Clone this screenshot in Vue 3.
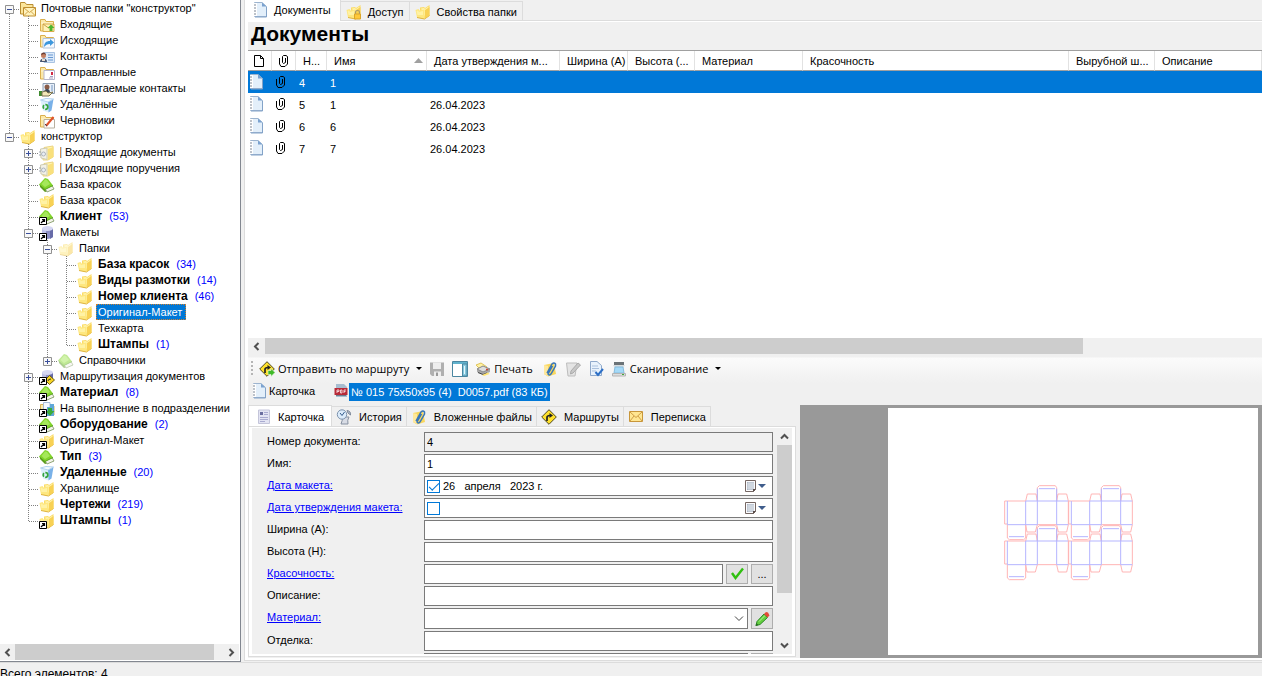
<script setup>
import { ref } from 'vue'

// Each guide letter draws one 19px column: I = line through, T = branch, L = last branch,
// D = line starts here, H = horizontal only, space = nothing.
const tree = [
  { g: 'D', box: '-', icon: 'mailroot', text: 'Почтовые папки "конструктор"' },
  { g: 'IT', icon: 'inbox', text: 'Входящие' },
  { g: 'IT', icon: 'outbox', text: 'Исходящие' },
  { g: 'IT', icon: 'contacts', text: 'Контакты' },
  { g: 'IT', icon: 'sent', text: 'Отправленные' },
  { g: 'IT', icon: 'suggest', text: 'Предлагаемые контакты' },
  { g: 'IT', icon: 'bin', text: 'Удалённые' },
  { g: 'IL', icon: 'draft', text: 'Черновики' },
  { g: 'L', box: '-', icon: 'folder', text: 'конструктор' },
  { g: ' T', box: '+', icon: 'docfolder', text: 'Входящие документы', bar: true },
  { g: ' T', box: '+', icon: 'docfolder', text: 'Исходящие поручения', bar: true },
  { g: ' T', icon: 'book', text: 'База красок' },
  { g: ' T', icon: 'folder', text: 'База красок' },
  { g: ' T', icon: 'book', link: true, text: 'Клиент', count: 53 },
  { g: ' T', box: '-', icon: 'db', link: true, text: 'Макеты' },
  { g: ' IT', box: '-', icon: 'folder', pale: true, text: 'Папки' },
  { g: ' IIT', icon: 'folder', text: 'База красок', count: 34 },
  { g: ' IIT', icon: 'folder', text: 'Виды размотки', count: 14 },
  { g: ' IIT', icon: 'folder', text: 'Номер клиента', count: 46 },
  { g: ' IIT', icon: 'folder', text: 'Оригинал-Макет', selected: true },
  { g: ' IIT', icon: 'folder', text: 'Техкарта' },
  { g: ' IIL', icon: 'folder', text: 'Штампы', count: 1 },
  { g: ' IL', box: '+', icon: 'book', pale: true, text: 'Справочники' },
  { g: ' T', box: '+', icon: 'dbroute', link: true, text: 'Маршрутизация документов' },
  { g: ' T', icon: 'book', link: true, text: 'Материал', count: 8 },
  { g: ' T', icon: 'task', link: true, text: 'На выполнение в подразделении' },
  { g: ' T', icon: 'book', link: true, text: 'Оборудование', count: 2 },
  { g: ' T', icon: 'folder', link: true, text: 'Оригинал-Макет' },
  { g: ' T', icon: 'book', text: 'Тип', count: 3 },
  { g: ' T', icon: 'bin', text: 'Удаленные', count: 20 },
  { g: ' T', icon: 'folder', text: 'Хранилище' },
  { g: ' T', icon: 'folder', text: 'Чертежи', count: 219 },
  { g: ' L', icon: 'folder', link: true, text: 'Штампы', count: 1 },
]

const guide = {
  I: 'M9.5 0V16',
  T: 'M9.5 0V16M10 9.5H19',
  L: 'M9.5 0V9M10 9.5H19',
  D: 'M9.5 10V16M10 9.5H19',
  ' ': '',
}

const rows = [
  { no: 4, name: 1, date: '' },
  { no: 5, name: 1, date: '26.04.2023' },
  { no: 6, name: 6, date: '26.04.2023' },
  { no: 7, name: 7, date: '26.04.2023' },
]

const dateOn = ref(true)
const approvedOn = ref(false)
const dateText = ref('26\u00a0\u00a0\u00a0апреля\u00a0\u00a0\u00a02023\u00a0г.')
</script>

<template>
  <div class="app">
    <svg class="defs" aria-hidden="true">
      <symbol id="folder" viewBox="0 0 16 16">
        <path d="M5 3.500 9 3 10 4 14.500 1V11.500L10 14.500 5 13Z" fill="#fbdc68" />
        <path d="M6 4.500 9 4 10 5 13.500 2.500V10L10 12.500Z" fill="#fff3ae" />
        <path d="M.500 6 3.500 5 4.500 6.500 9.500 5.500V15L2 13.500Z" fill="#fee77f" />
        <path d="M1.500 7 3 6.500 4 8 8 7V11L2.500 11Z" fill="#fff2a4" />
        <path d="M2 13.500 9.500 15 14.500 11.500" fill="none" stroke="#dfb43d" />
        <path d="M10 6 14.500 3V11.500L10 14.500Z" fill="#f8d154" />
      </symbol>
      <symbol id="yellowbox" viewBox="0 0 16 16">
        <path d="M1.500 14V2.500H6L7 4.500H14.500V14Z" fill="#fbe8a8" stroke="#dbb04e" />
        <path d="M2 6H14" stroke="#fff6d5" />
      </symbol>
      <symbol id="mailroot" viewBox="0 0 16 16">
        <path d="M.5 13V1.500H5L6.500 3.500H13V13Z" fill="#fbe59a" stroke="#b98e33" />
        <path d="M3.500 6.500H15.500V15H3.500Z" fill="#fff3be" stroke="#c08f2f" />
        <path d="M4 7 9.500 11.500 15 7M4 14.500 8 10.500M15 14.500 11 10.500" fill="none" stroke="#d2a54a" />
      </symbol>
      <symbol id="inbox" viewBox="0 0 16 16">
        <use href="#yellowbox" />
        <path d="M4 7H15V14.500H4Z" fill="#fff2b8" stroke="#d9ac4c" />
        <path d="M4 7 9.500 11 15 7" fill="none" stroke="#cda045" />
        <path d="M8.500 11 12 7.500 15.500 11H13.500V14H10.500V11Z" fill="#4fb52e" />
      </symbol>
      <symbol id="outbox" viewBox="0 0 16 16">
        <use href="#yellowbox" />
        <path d="M4 5.500H15.500V15H4Z" fill="#f4f9ff" stroke="#b4c5dc" />
        <path d="M5 14C5 10 7 8 11 8V6L15 9.500 11 13V11C8 11 7 12 5 14Z" fill="#3c97dd" />
      </symbol>
      <symbol id="contacts" viewBox="0 0 16 16">
        <path d="M5 3.500H15.500V13.500H5Z" fill="#dceafa" stroke="#a9c3e2" />
        <path d="M9 6H14M9 8.500H14M9 11H14" stroke="#6797d1" />
        <circle cx="4.500" cy="6.500" r="2.500" fill="#c68062" />
        <path d="M2 6Q2 3 5 3.500 7 4 7 6L5 5Z" fill="#6c3e33" />
        <path d="M1 13Q1 9.500 4.500 9.500T8 13Z" fill="#475773" />
        <path d="M3 10H6V12H3Z" fill="#e8dcd2" />
      </symbol>
      <symbol id="sent" viewBox="0 0 16 16">
        <use href="#yellowbox" />
        <path d="M5 5.500H15.500V14.500H5Z" fill="#fff" stroke="#b7b7cd" />
        <path d="M12 7H14V10H12Z" fill="#d22a45" />
        <path d="M10 13H14M11 11.500H14" stroke="#a8a0c0" />
      </symbol>
      <symbol id="suggest" viewBox="0 0 16 16">
        <path d="M4 2.500H15.500V12.500H4Z" fill="#e8f0fa" stroke="#8e9fb3" />
        <circle cx="8" cy="6" r="2.500" fill="#8a5c48" />
        <path d="M5 12Q5 8 8 8T11 12Z" fill="#3b4654" />
        <path d="M12 5H14M12 7H14M12 9H14" stroke="#7596c0" />
        <path d="M0 10H3V15H0Z" fill="#3f8b2f" />
        <path d="M3 11 7 10 9 12 14 11 10 15H3Z" fill="#f2e6b8" stroke="#7b7350" />
      </symbol>
      <symbol id="bin" viewBox="0 0 16 16">
        <path d="M1.500 3.500 9 5 9.500 15.500 4 13.500Z" fill="#dceffc" />
        <path d="M9 5 14.500 2 12.500 13.500 9.500 15.500Z" fill="#79b1e8" />
        <path d="M1.500 3 7 1.500 14.500 2 9 5Z" fill="#f4fbff" stroke="#b3d3f0" />
        <circle cx="6.500" cy="10" r="2.300" fill="none" stroke="#35a53c" stroke-width="1.700" stroke-dasharray="3.600 1.200" />
      </symbol>
      <symbol id="draft" viewBox="0 0 16 16">
        <use href="#yellowbox" />
        <path d="M5 6.500H15.500V15H5Z" fill="#fff" stroke="#b8b0a0" />
        <path d="M7 13 14.500 4" stroke="#e0522c" stroke-width="2" />
        <path d="M6 11 8 13" stroke="#445" />
      </symbol>
      <symbol id="docfolder" viewBox="0 0 16 16">
        <path d="M5 2.500 14 1V12L9 15H4Z" fill="#fff4b2" stroke="#ecd481" />
        <path d="M9 4 14.500 2V12L9 15Z" fill="#f9e07c" />
        <path d="M1.500 4 8 3V14.500L2 13Z" fill="#f3f2e8" stroke="#cfcbb0" />
        <circle cx="4.500" cy="9" r="2" fill="#e9eef4" stroke="#aeb5bd" />
        <path d="M1 6V12" stroke="#9aa3ad" stroke-dasharray="2 1" />
      </symbol>
      <symbol id="book" viewBox="0 0 16 16">
        <path d="M1 8 11 9 15 12 6 15 1 10Z" fill="#5b9a1c" />
        <path d="M6 11.500 13 8.500 15 12 8 15Z" fill="#f3f3ea" stroke="#93a77c" />
        <path d="M0 7.500 6 1 9 2 14 8.500 6 12.500Z" fill="#82d42c" />
        <path d="M2.500 7 6 2.500 8 3 11 7 6 10Z" fill="#a5e85a" />
        <path d="M.500 8 6 12.500 14 8.500" fill="none" stroke="#5aa51e" />
      </symbol>
      <symbol id="db" viewBox="0 0 16 16">
        <path d="M3 3.500V12Q8 16 14 12V3.500Z" fill="#8c8fc6" />
        <path d="M3 4V12Q5 14 7 14V4Z" fill="#bcbfe6" />
        <path d="M11 4V14L14 12V4Z" fill="#676ba8" />
        <ellipse cx="8.500" cy="3.500" rx="5.500" ry="2.500" fill="#d5d7f3" />
      </symbol>
      <symbol id="dbroute" viewBox="0 0 16 16">
        <use href="#db" />
        <path d="M10.500 6.500 15.500 11 10.500 15.500 6 11Z" fill="#f7d423" stroke="#6b5a13" />
        <path d="M9 12Q9 10 12 10" fill="none" stroke="#333" />
      </symbol>
      <symbol id="task" viewBox="0 0 16 16">
        <path d="M1.500 14V3.500H6L8 5H15V14Z" fill="#fbe9a8" stroke="#d9b45c" />
        <path d="M4.500 1.500H11V12H4.500Z" fill="#f4f8fd" stroke="#a7bbd5" />
        <path d="M8 6H11V3H15V15H8Z" fill="#5fa7d8" />
        <path d="M9 7H13V10H15.500L11 15 6.500 10H9Z" fill="#3bac3a" />
      </symbol>
      <symbol id="shortcut" viewBox="0 0 8 8">
        <path d="M.5.5H7.500V7.500H.5Z" fill="#fff" stroke="#000" />
        <path d="M2 6 5 3M3 2.500H5.500V5" fill="none" stroke="#000" stroke-width="1.200" />
      </symbol>
      <symbol id="notebook" viewBox="0 0 16 16">
        <path d="M2.500.5H10L14.500 4.500V14.500H2.500Z" fill="#e3effa" stroke="#9db4cf" />
        <path d="M10 .5V4.500H14.500Z" fill="#7ba2cf" />
        <path d="M14.500 5V15H3" fill="none" stroke="#83a3c8" />
        <path d="M3.500 1V14" stroke="#fff" stroke-width="3" />
        <path d="M2 3H4M2 6H4M2 9H4M2 12H4" stroke="#7c8694" />
      </symbol>
      <symbol id="clip" viewBox="0 0 16 16">
        <path d="M4.500 5V11L6 13.500H10L12.500 11V3.500L11 2.500H8.500L7.500 3.500V9.500L8.500 10.500 10.500 9.500V5" fill="none" stroke="currentColor" />
      </symbol>
      <symbol id="page" viewBox="0 0 16 16">
        <path d="M3.500 2.500H9.500L12.500 5.500V13.500H3.500ZM9.500 2.500V5.500H12.500" fill="none" stroke="#000" />
      </symbol>
      <symbol id="lockfolder" viewBox="0 0 16 16">
        <use href="#folder" />
        <path d="M9.500 10V8Q9.500 6.500 11.500 6.500T13.500 8V10" fill="none" stroke="#a99a6c" stroke-width="1.200" />
        <path d="M8.500 10H14.500V15H8.500Z" fill="#ffc93a" stroke="#dba528" />
      </symbol>
      <symbol id="route" viewBox="0 0 16 16">
        <path d="M8 .7 15.300 8 8 15.300.7 8Z" fill="#ffe12b" stroke="#4d4720" />
        <path d="M6 12V8.500Q6 6.500 9 6.500" fill="none" stroke="#222" stroke-width="1.700" />
        <path d="M8.500 4 12 6.500 8.500 9Z" fill="#222" />
      </symbol>
      <symbol id="sendroute" viewBox="0 0 16 16">
        <use href="#route" />
        <path d="M9 9.500H12V7.500L16 11.500 12 15.500V13.500H9Z" fill="#3fb929" stroke="#e9f7df" stroke-width=".6" />
      </symbol>
      <symbol id="save" viewBox="0 0 16 16">
        <path d="M1 1.500H15V15H3L1 13Z" fill="#b0b0b0" />
        <path d="M4 1.500H12V8H4ZM5 10.500H12V15H5Z" fill="#eee" />
        <path d="M7 11.500H9V15H7Z" fill="#999" />
      </symbol>
      <symbol id="panel" viewBox="0 0 16 16">
        <path d="M.5.5H15.500V15.500H.5Z" fill="#fff" stroke="#4a86a0" />
        <path d="M1 1H15V3H1Z" fill="#60b2cd" />
        <path d="M10.500 3V15H15V3Z" fill="#86c9df" stroke="#4a86a0" />
        <path d="M12.500 5V13" stroke="#e4f7fc" />
      </symbol>
      <symbol id="printer" viewBox="0 0 16 16">
        <path d="M1 4 6 2 12 6 6 9Z" fill="#fff2a0" stroke="#e0c35c" />
        <path d="M2 8 8 5 15 8V11L8 14 2 11Z" fill="#a9a9a9" />
        <path d="M2 8 8 5 15 8 8 11Z" fill="#dedede" stroke="#8a8a8a" />
        <path d="M3 11.500 8 13.500 12 12" fill="none" stroke="#444" />
        <path d="M7 14 13 11.500 14.500 13 9 15Z" fill="#ffe470" />
        <circle cx="12" cy="8.500" r="1" fill="#cc3b28" />
      </symbol>
      <symbol id="attach" viewBox="0 0 16 16">
        <path d="M2 4 12 2 14 13 6 15.500 2 13Z" fill="#f9d75e" />
        <path d="M2 4 6 5V15L2 13Z" fill="#ffe89b" />
        <path d="M5 12 10 3Q12 1 13.500 3V5L9 13Q7 15 6 13L10.500 5" fill="none" stroke="#3977ba" stroke-width="1.500" />
      </symbol>
      <symbol id="editgray" viewBox="0 0 16 16">
        <path d="M1.500 2H12L10 15H3Z" fill="#e4e4e4" stroke="#bdbdbd" />
        <path d="M6 10 13 2 15.500 4 8 12 5.500 13Z" fill="#c8c8c8" stroke="#aaa" />
      </symbol>
      <symbol id="doccheck" viewBox="0 0 16 16">
        <path d="M2.500.5H9L13.500 4.500V14.500H2.500Z" fill="#e8f2fc" stroke="#8fa9cb" />
        <path d="M4 5H10M4 7.500H11M4 10H8" stroke="#a9c0dd" />
        <path d="M7.500 11 10 14 15 8" fill="none" stroke="#2c6fc6" stroke-width="2" />
      </symbol>
      <symbol id="scanner" viewBox="0 0 16 16">
        <path d="M3 1H13V4H3Z" fill="#6b7377" />
        <path d="M2 4H14L12.500 6.500H3.500Z" fill="#d6dcdf" />
        <path d="M4 6H12L13 12H3Z" fill="#a5daf8" stroke="#86bcdd" />
        <path d="M1.500 12.500H14.500V15H1.500Z" fill="#dedede" stroke="#b4b4b4" />
        <path d="M11 13.500H13" stroke="#43a83b" />
      </symbol>
      <symbol id="pdf" viewBox="0 0 16 16">
        <path d="M3 1H11L14 4V14H3Z" fill="#a7bdd0" />
        <path d="M1.500 5H14.500V12H1.500Z" fill="#b82a38" />
        <path d="M4 10V7H6V8.500H4M7.500 7V10H9V7ZM11 10V7H13M11 8.500H12.500" fill="none" stroke="#f7dadd" stroke-width=".9" />
        <path d="M3 12.500H13" stroke="#6d7c8b" />
      </symbol>
      <symbol id="card" viewBox="0 0 16 16">
        <path d="M2.500 1H13.500V14.500H2.500Z" fill="#e3e4f3" stroke="#c4c5da" />
        <path d="M4 3H7V6H4Z" fill="#6a6e9f" />
        <path d="M8 3.500H12M8 5.500H12M4 8.500H12M4 10.500H12M4 12.500H9" stroke="#a9abd0" />
      </symbol>
      <symbol id="history" viewBox="0 0 16 16">
        <path d="M6 8H13Q11 11 12 15H5Q7 11 6 8Z" fill="#d8dce5" stroke="#8791a1" />
        <circle cx="6" cy="5.500" r="4.700" fill="#dcecfb" stroke="#7c92ad" />
        <path d="M4 4 6 6.500 8.500 3" fill="none" stroke="#345b8b" />
        <path d="M11 1.500Q15 2 14.500 6L12 4Z" fill="#b4bccb" stroke="#7e899a" />
      </symbol>
      <symbol id="mail" viewBox="0 0 16 16">
        <path d="M1.500 2.500H14.500V12.500H1.500Z" fill="#ffe691" stroke="#c8963a" />
        <path d="M2 3 8 8.500 14 3M2 12 6 7M14 12 10 7" fill="none" stroke="#cf9d45" />
      </symbol>
      <symbol id="calendar" viewBox="0 0 12 13">
        <path d="M.5.5H10.500V9.500L8.500 11.500H.5Z" fill="#fbfbfd" stroke="#756763" />
        <path d="M2 2H9V10H2Z" fill="#aab4c3" />
        <path d="M2 4H9M2 6H9M2 8H9M4 2V10M6 2V10M8 2V10" stroke="#eef1f5" stroke-width=".7" />
        <path d="M8 12V9H11Z" fill="#594b48" />
      </symbol>
      <symbol id="check" viewBox="0 0 16 16">
        <path d="M3 7 6.500 12 14 2.500" fill="none" stroke="#30c010" stroke-width="2.400" />
      </symbol>
      <symbol id="pencil" viewBox="0 0 16 16">
        <path d="M2 14.500 3 10.500 10 3 13.500 6.500 6 13.500Z" fill="#63cf3e" stroke="#2d8927" />
        <path d="M5 10.500 11 4.500" stroke="#b5f29a" />
        <path d="M10 3 12 1 14 1.500 15.500 4.500 13.500 6.500Z" fill="#e34b37" />
        <path d="M1.500 15 2.500 12 4.500 14Z" fill="#2c6e26" />
      </symbol>
      <symbol id="arrow" viewBox="0 0 9 9">
        <path d="M6.500 1 3 4.500 6.500 8" fill="none" stroke="#505050" stroke-width="2" />
      </symbol>
      <symbol id="caret" viewBox="0 0 8 4">
        <path d="M0 0H8L4 4Z" fill="currentColor" />
      </symbol>
    </svg>

    <main class="main">
      <nav class="sidebar" aria-label="Папки">
        <ul class="tree">
          <li v-for="(n, i) in tree" :key="i" class="node">
            <span v-for="(c, k) in n.g" :key="k" class="guide">
              <svg viewBox="0 0 19 16" aria-hidden="true">
                <path :d="guide[c]" stroke="#808080" stroke-dasharray="1 1" />
              </svg>
              <button v-if="n.box && k === n.g.length - 1" class="toggle" type="button" :aria-label="n.text">
                <svg viewBox="0 0 9 9" aria-hidden="true">
                  <path d="M.5.5H8.500V8.500H.5Z" fill="#f8f8f8" stroke="#919191" />
                  <path :d="n.box === '+' ? 'M2 4.500H7M4.500 2V7' : 'M2 4.500H7'" stroke="#3a4f9b" />
                </svg>
              </button>
            </span>
            <span class="node-icon">
              <svg class="ico" :class="{ pale: n.pale }" aria-hidden="true"><use :href="'#' + n.icon" /></svg>
              <svg v-if="n.link" class="shortcut" aria-hidden="true"><use href="#shortcut" /></svg>
            </span>
            <a href="#" class="node-text" :class="{ strong: n.count, selected: n.selected }"><i v-if="n.bar" class="bar"></i>{{ n.text }}</a>
            <span v-if="n.count" class="count">({{ n.count }})</span>
          </li>
        </ul>
        <div class="hscroll">
          <button type="button" class="sbtn" aria-label="Влево"><svg aria-hidden="true"><use href="#arrow" /></svg></button>
          <div class="track"><div class="thumb"></div></div>
          <button type="button" class="sbtn flip" aria-label="Вправо"><svg aria-hidden="true"><use href="#arrow" /></svg></button>
        </div>
      </nav>

      <section class="content">
        <div class="tabs top-tabs" role="tablist">
          <button type="button" role="tab" class="tab active"><svg class="ico" aria-hidden="true"><use href="#notebook" /></svg>Документы</button>
          <button type="button" role="tab" class="tab"><svg class="ico" aria-hidden="true"><use href="#lockfolder" /></svg>Доступ</button>
          <button type="button" role="tab" class="tab"><svg class="ico" aria-hidden="true"><use href="#folder" /></svg>Свойства папки</button>
        </div>

        <div class="body">
          <h1 class="title">Документы</h1>

          <div class="list">
            <table>
              <colgroup>
                <col class="w24" /><col class="w24" /><col class="w31" /><col class="w100" /><col class="w133" />
                <col class="w68" /><col class="w67" /><col class="w108" /><col class="w266" /><col class="w86" /><col />
              </colgroup>
              <thead>
                <tr>
                  <th aria-label="Тип"><svg class="ico" aria-hidden="true"><use href="#page" /></svg></th>
                  <th aria-label="Вложения"><svg class="ico" aria-hidden="true"><use href="#clip" /></svg></th>
                  <th class="t">Н...</th>
                  <th class="t"><span class="sorted">Имя<svg class="sort" viewBox="0 0 9 5" aria-hidden="true"><path d="M0 5 4.500 0 9 5Z" fill="#a0a0a0" /></svg></span></th>
                  <th class="t">Дата утверждения м...</th>
                  <th class="t">Ширина (A)</th>
                  <th class="t">Высота (...</th>
                  <th class="t">Материал</th>
                  <th class="t">Красочность</th>
                  <th class="t">Вырубной ш...</th>
                  <th class="t">Описание</th>
                </tr>
              </thead>
              <tbody>
                <tr v-for="(r, i) in rows" :key="r.no" :class="{ current: i === 0 }">
                  <td><svg class="ico" aria-hidden="true"><use href="#notebook" /></svg></td>
                  <td class="mid"><svg class="ico" aria-hidden="true"><use href="#clip" /></svg></td>
                  <td class="t">{{ r.no }}</td>
                  <td class="t">{{ r.name }}</td>
                  <td class="t">{{ r.date }}</td>
                  <td></td><td></td><td></td><td></td><td></td><td></td>
                </tr>
              </tbody>
            </table>
          </div>

          <div class="hscroll list-scroll">
            <button type="button" class="sbtn" aria-label="Влево"><svg aria-hidden="true"><use href="#arrow" /></svg></button>
            <div class="track"><div class="thumb"></div></div>
          </div>

          <div class="toolbar" role="toolbar">
            <span class="grip"></span>
            <button type="button" class="tool"><svg class="ico" aria-hidden="true"><use href="#sendroute" /></svg>Отправить по маршруту<svg class="drop" aria-hidden="true"><use href="#caret" /></svg></button>
            <button type="button" class="tool" aria-label="Сохранить"><svg class="ico" aria-hidden="true"><use href="#save" /></svg></button>
            <button type="button" class="tool" aria-label="Область просмотра"><svg class="ico" aria-hidden="true"><use href="#panel" /></svg></button>
            <button type="button" class="tool print"><svg class="ico" aria-hidden="true"><use href="#printer" /></svg>Печать</button>
            <button type="button" class="tool" aria-label="Вложить файл"><svg class="ico" aria-hidden="true"><use href="#attach" /></svg></button>
            <button type="button" class="tool" aria-label="Изменить"><svg class="ico" aria-hidden="true"><use href="#editgray" /></svg></button>
            <button type="button" class="tool" aria-label="Проверить"><svg class="ico" aria-hidden="true"><use href="#doccheck" /></svg></button>
            <button type="button" class="tool scan"><svg class="ico" aria-hidden="true"><use href="#scanner" /></svg>Сканирование<svg class="drop" aria-hidden="true"><use href="#caret" /></svg></button>
          </div>

          <div class="files">
            <a href="#" class="file"><svg class="ico" aria-hidden="true"><use href="#notebook" /></svg><span class="file-name">Карточка</span></a>
            <a href="#" class="file"><svg class="ico" aria-hidden="true"><use href="#pdf" /></svg><span class="file-name picked">№ 015 75x50x95 (4)&nbsp; D0057.pdf (83 КБ)</span></a>
          </div>

          <div class="detail">
            <div class="card">
              <div class="tabs card-tabs" role="tablist">
                <button type="button" role="tab" class="tab active"><svg class="ico" aria-hidden="true"><use href="#card" /></svg>Карточка</button>
                <button type="button" role="tab" class="tab"><svg class="ico" aria-hidden="true"><use href="#history" /></svg>История</button>
                <button type="button" role="tab" class="tab"><svg class="ico" aria-hidden="true"><use href="#attach" /></svg>Вложенные файлы</button>
                <button type="button" role="tab" class="tab"><svg class="ico" aria-hidden="true"><use href="#route" /></svg>Маршруты</button>
                <button type="button" role="tab" class="tab"><svg class="ico" aria-hidden="true"><use href="#mail" /></svg>Переписка</button>
              </div>
              <div class="pane">
                <form class="form" @submit.prevent>
                  <div class="row"><label class="lbl" for="num">Номер документа:</label><input id="num" class="field ro" value="4" readonly /></div>
                  <div class="row"><label class="lbl" for="name">Имя:</label><input id="name" class="field" value="1" /></div>
                  <div class="row">
                    <a id="l-date" href="#" class="lbl">Дата макета:</a>
                    <div class="field date">
                      <input v-model="dateOn" type="checkbox" class="tick" aria-label="Дата макета задана" />
                      <input v-model="dateText" class="date-text" aria-labelledby="l-date" />
                      <button type="button" class="cal" aria-label="Календарь"><svg class="cal-ico" aria-hidden="true"><use href="#calendar" /></svg><svg class="cal-drop" aria-hidden="true"><use href="#caret" /></svg></button>
                    </div>
                  </div>
                  <div class="row">
                    <a id="l-appr" href="#" class="lbl">Дата утверждения макета:</a>
                    <div class="field date">
                      <input v-model="approvedOn" type="checkbox" class="tick" aria-label="Дата утверждения задана" />
                      <input class="date-text" aria-labelledby="l-appr" />
                      <button type="button" class="cal" aria-label="Календарь"><svg class="cal-ico" aria-hidden="true"><use href="#calendar" /></svg><svg class="cal-drop" aria-hidden="true"><use href="#caret" /></svg></button>
                    </div>
                  </div>
                  <div class="row"><label class="lbl" for="wid">Ширина (A):</label><input id="wid" class="field" /></div>
                  <div class="row"><label class="lbl" for="hei">Высота (H):</label><input id="hei" class="field" /></div>
                  <div class="row">
                    <a id="l-col" href="#" class="lbl">Красочность:</a>
                    <input class="field" aria-labelledby="l-col" />
                    <button type="button" class="sq" aria-label="Применить"><svg class="ico" aria-hidden="true"><use href="#check" /></svg></button>
                    <button type="button" class="sq">...</button>
                  </div>
                  <div class="row"><label class="lbl" for="desc">Описание:</label><input id="desc" class="field" /></div>
                  <div class="row tall">
                    <a id="l-mat" href="#" class="lbl">Материал:</a>
                    <div class="field combo">
                      <select aria-labelledby="l-mat"><option></option></select>
                      <svg class="chev" viewBox="0 0 10 6" aria-hidden="true"><path d="M1 .5 5 4.500 9 .5" fill="none" stroke="#444" /></svg>
                    </div>
                    <button type="button" class="sq" aria-label="Изменить материал"><svg class="ico" aria-hidden="true"><use href="#pencil" /></svg></button>
                  </div>
                  <div class="row"><label class="lbl" for="fin">Отделка:</label><input id="fin" class="field" /></div>
                  <div class="row tall"><span class="lbl"></span><input class="field" aria-label="Тип отделки" /><button type="button" class="sq" aria-label="Выбрать"></button></div>
                </form>
                <div class="vscroll">
                  <button type="button" class="sbtn up" aria-label="Вверх"><svg aria-hidden="true"><use href="#arrow" /></svg></button>
                  <div class="vtrack"><div class="vthumb"></div></div>
                  <button type="button" class="sbtn down" aria-label="Вниз"><svg aria-hidden="true"><use href="#arrow" /></svg></button>
                </div>
              </div>
            </div>

            <div class="preview">
              <div class="sheet">
                <svg class="drawing" viewBox="9 5 480 360" role="img" aria-label="Развёртка коробки">
                  <g v-for="p in [[0, 0], [192, 0], [0, 120], [192, 120]]" :key="p.join()" :transform="`translate(${p[0]} ${p[1]})`" fill="none" stroke-width="3">
                    <path d="M52 92H44V161H52M52 163V203L58 208H101L107 203V163M107 92 112 71H138L142 92M107 163 111 185H136L142 163M142 92V52L148 46H196L200 52V92M200 92 204 71H230L235 92V163L230 185H205L200 163M52 92H107M142 163H200" stroke="#ffb5b5" />
                    <path d="M107 92H235M52 163H142M200 163H235M52 92V163M107 92V163M142 55V163M200 55V163M147 55H195M57 199H102" stroke="#b5b5ff" />
                  </g>
                </svg>
              </div>
            </div>
          </div>
        </div>
      </section>
    </main>

    <footer class="status">Всего элементов: 4</footer>
  </div>
</template>

<style>
body {
  margin: 0;
  overflow: hidden;
}
</style>

<style scoped>
.app {
  height: 100vh;
  display: flex;
  flex-direction: column;
  overflow: hidden;
  background: #f0f0f0;
  color: #000;
  font: 11px/16px "Liberation Sans", Arial, sans-serif;
}
.app * {
  box-sizing: border-box;
}
.defs {
  position: absolute;
  width: 0;
  height: 0;
}
button {
  padding: 0;
  border: 0;
  background: none;
  font: inherit;
  color: inherit;
}
.ico {
  width: 16px;
  height: 16px;
  flex: none;
  display: block;
}
.pale {
  opacity: 0.5;
}
.main {
  flex: 1;
  min-height: 0;
  display: grid;
  grid-template-columns: 241px minmax(0, 1fr);
  column-gap: 3px;
}

/* folder tree */
.sidebar {
  display: flex;
  flex-direction: column;
  min-height: 0;
  background: #fff;
  border-right: 1px solid #828790;
  border-bottom: 1px solid #828790;
  padding: 0 1px 1px 0;
}
.tree {
  flex: 1;
  min-height: 0;
  overflow: hidden;
  margin: 0;
  padding: 0;
  list-style: none;
}
.node {
  display: flex;
  height: 16px;
  white-space: nowrap;
}
.guide {
  position: relative;
  width: 19px;
  height: 16px;
  flex: none;
}
.guide > svg {
  display: block;
  width: 19px;
  height: 16px;
}
.toggle {
  position: absolute;
  left: 5px;
  top: 5px;
  width: 9px;
  height: 9px;
}
.toggle svg {
  display: block;
  width: 9px;
  height: 9px;
}
.node-icon {
  position: relative;
  width: 20px;
  padding: 1px 0 0 1px;
  flex: none;
}
.shortcut {
  position: absolute;
  left: 1px;
  bottom: -1px;
  width: 8px;
  height: 8px;
}
.node-text {
  color: #000;
  text-decoration: none;
  padding: 0 1px 0 2px;
}
.strong {
  font-weight: bold;
  font-size: 12px;
}
.selected {
  background: #0078d7;
  color: #fff;
  outline: 1px dotted #d08030;
  outline-offset: -1px;
  padding-right: 4px;
}
.bar {
  display: inline-block;
  width: 2px;
  height: 11px;
  margin-right: 3px;
  vertical-align: -2px;
  background: linear-gradient(90deg, #d88a4a 50%, #b5d8f3 50%);
}
.count {
  color: #00f;
  margin-left: 6px;
}

/* scroll bars */
.hscroll {
  display: flex;
  height: 16px;
  background: #f0f0f0;
  flex: none;
}
.sbtn {
  width: 15px;
  flex: none;
  display: flex;
  align-items: center;
  justify-content: center;
}
.sbtn svg {
  width: 9px;
  height: 9px;
}
.flip svg {
  transform: rotate(180deg);
}
.up svg {
  transform: rotate(90deg);
}
.down svg {
  transform: rotate(-90deg);
}
.track {
  flex: 1;
}
.sidebar .thumb {
  width: 95%;
}
.thumb {
  height: 100%;
  background: #cdcdcd;
}
.list-scroll .sbtn {
  width: 17px;
}
.list-scroll .thumb {
  width: 82%;
}

/* tabs */
.content {
  display: flex;
  flex-direction: column;
  min-width: 0;
  min-height: 0;
  margin-bottom: 1px;
  border-left: 1px solid #dcdcdc;
}
.tabs {
  display: flex;
  align-items: flex-end;
  height: 21px;
  flex: none;
  border-bottom: 1px solid #dcdcdc;
}
.tab {
  display: flex;
  align-items: center;
  height: 19px;
  border: 1px solid #dcdcdc;
  border-left: 0;
  border-bottom: 0;
  white-space: nowrap;
}
.tab.active {
  background: #fff;
  height: 22px;
  margin-bottom: -1px;
}
.top-tabs .tab {
  gap: 6px;
  padding: 0 5px;
  padding-top: 2px;
}
.top-tabs .active {
  padding: 0 9px 0 7px;
  border-top: 0;
}
.body {
  flex: 1;
  min-height: 0;
  display: flex;
  flex-direction: column;
  padding: 1px 0 2px 3px;
  background: #fff;
  border-bottom: 1px solid #dcdcdc;
}
.title {
  margin: 0;
  height: 28px;
  flex: none;
  padding-left: 3px;
  background: #f0f0f0;
  font-size: 21px;
  line-height: 24px;
}

/* document list */
.list {
  flex: 1;
  min-height: 0;
  overflow: hidden;
  border-top: 1px solid #a0a0a0;
}
table {
  width: 100%;
  table-layout: fixed;
  border-collapse: separate;
  border-spacing: 0;
}
.w24 { width: 24px; }
.w31 { width: 31px; }
.w100 { width: 100px; }
.w133 { width: 133px; }
.w68 { width: 68px; }
.w67 { width: 67px; }
.w108 { width: 108px; }
.w266 { width: 266px; }
.w86 { width: 86px; }
th,
td {
  padding: 0;
  text-align: left;
  font-weight: normal;
  white-space: nowrap;
  overflow: hidden;
}
th {
  height: 20px;
  border-right: 1px solid #e2e2e2;
  border-bottom: 1px solid #a0a0a0;
}
th .ico {
  margin-left: 3px;
}
th.t {
  padding-left: 7px;
}
.sorted {
  display: flex;
  justify-content: space-between;
  align-items: center;
  padding-right: 3px;
}
.sort {
  width: 9px;
  height: 5px;
}
td {
  height: 22px;
}
td.t {
  padding: 2px 0 0 3px;
}
td.mid .ico {
  color: #000;
}
.current td {
  background: #0078d7;
  color: #fff;
}

/* toolbar */
.toolbar {
  display: flex;
  align-items: center;
  flex: none;
  height: 29px;
  padding: 0 3px;
  background: linear-gradient(#f0f0f0 0 3px, #fbfbfb 4px, #f0f0f0);
  font: 11px/20px "Open Sans", "Noto Sans", sans-serif;
}
.grip {
  width: 2px;
  height: 16px;
  margin-right: 6px;
  background: repeating-linear-gradient(#b5b5b5 0 2px, transparent 2px 4px);
}
.tool {
  display: flex;
  align-items: center;
  gap: 3px;
  margin-right: 7px;
  white-space: nowrap;
}
.drop {
  width: 6px;
  height: 3px;
  margin-left: 4px;
}
.print {
  margin-right: 9px;
}

.files {
  display: flex;
  flex: none;
  height: 22px;
  gap: 16px;
  background: #f0f0f0;
  padding-left: 3px;
}
.file {
  display: flex;
  color: #000;
  text-decoration: none;
}
.file-name {
  height: 17px;
  padding: 0 2px;
}
.picked {
  height: 18px;
  line-height: 18px;
  background: #0078d7;
  color: #fff;
}

/* card and preview */
.detail {
  display: grid;
  grid-template-columns: 550px minmax(0, 1fr);
  column-gap: 2px;
  height: 253px;
  flex: none;
  background: #f0f0f0;
}
.card {
  display: flex;
  flex-direction: column;
  min-height: 0;
  padding: 0 2px 1px 0;
}
.card-tabs {
  height: 21px;
  border-bottom: 0;
}
.card-tabs .tab {
  gap: 7px;
  padding: 1px 4px 0;
  height: 20px;
}
.card-tabs .active {
  gap: 6px;
  padding: 0 7px;
  height: 22px;
  border-left: 1px solid #dcdcdc;
}
.pane {
  flex: 1;
  min-height: 0;
  display: flex;
  border: 1px solid #dcdcdc;
  padding: 1px 3px 2px;
  background: #fff;
}
.form {
  flex: 1;
  min-width: 0;
  overflow: hidden;
  background: #f0f0f0;
  padding: 4px 4px 0 15px;
}
.row {
  display: flex;
  height: 20px;
  margin-bottom: 2px;
}
.row.tall {
  height: 21px;
}
.lbl {
  width: 157px;
  flex: none;
  line-height: 18px;
}
a.lbl {
  color: #00f;
  text-decoration: underline;
}
.field {
  flex: 1;
  min-width: 0;
  border: 1px solid #7a7a7a;
  background: #fff;
  padding: 0 2px;
  font: inherit;
  color: #000;
}
.ro {
  background: #f0f0f0;
}
.date {
  display: flex;
  align-items: center;
}
.tick {
  appearance: none;
  width: 13px;
  height: 13px;
  margin: 0;
  border: 1px solid #0078d7;
  background: #fff;
}
.tick:checked::before {
  content: "";
  display: block;
  width: 9px;
  height: 4px;
  margin: 2px 0 0 1px;
  border-left: 1px solid #0078d7;
  border-bottom: 1px solid #0078d7;
  transform: rotate(-45deg);
}
.date-text {
  flex: 1;
  min-width: 0;
  border: 0;
  padding: 0 3px;
  background: none;
  font: inherit;
}
.cal {
  display: flex;
  align-items: center;
  gap: 1px;
  padding-right: 4px;
  color: #3f5d8c;
}
.cal-ico {
  width: 12px;
  height: 13px;
}
.cal-drop {
  width: 8px;
  height: 4px;
}
.sq {
  display: flex;
  align-items: center;
  justify-content: center;
  width: 22px;
  flex: none;
  margin-left: 3px;
  border: 1px solid #adadad;
  background: #e1e1e1;
}
.combo {
  display: flex;
  align-items: center;
  padding: 0 3px 0 0;
}
.combo select {
  flex: 1;
  min-width: 0;
  border: 0;
  appearance: none;
  background: none;
  font: inherit;
}
.chev {
  width: 10px;
  height: 6px;
}
.vscroll {
  display: flex;
  flex-direction: column;
  width: 15px;
  flex: none;
  background: #f0f0f0;
}
.vscroll .sbtn {
  height: 17px;
}
.vtrack {
  flex: 1;
}
.vthumb {
  height: 77%;
  background: #cdcdcd;
}
.preview {
  display: flex;
  background: #999;
  padding: 3px 4px 3px 88px;
}
.sheet {
  flex: 1;
  display: flex;
  align-items: center;
  justify-content: center;
  background: #fff;
}
.drawing {
  width: 160px;
  height: 120px;
}

.status {
  height: 14px;
  flex: none;
  overflow: hidden;
  border-top: 1px solid #dcdcdc;
  padding-top: 3px;
  font-size: 12px;
  white-space: nowrap;
}
</style>
